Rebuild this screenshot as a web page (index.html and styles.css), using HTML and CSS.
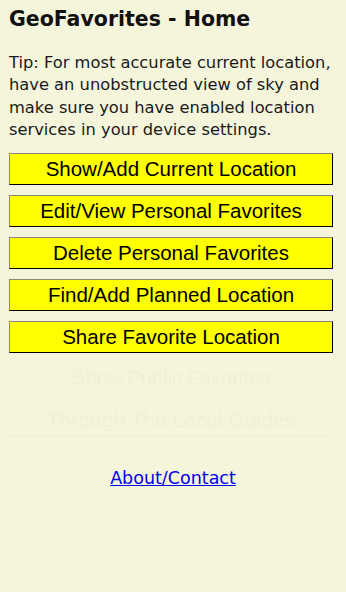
FILE: index.html
```html
<!DOCTYPE html>
<html>
<head>
<meta charset="utf-8">
<link rel="stylesheet" href="styles.css">
</head>
<body>
<h1 class="title">GeoFavorites - Home</h1>
<p class="tip">Tip: For most accurate current location, have an unobstructed view of sky and make sure you have enabled location services in your device settings.</p>
<div class="buttons">
  <button class="btn">Show/Add Current Location</button>
  <button class="btn">Edit/View Personal Favorites</button>
  <button class="btn">Delete Personal Favorites</button>
  <button class="btn">Find/Add Planned Location</button>
  <button class="btn">Share Favorite Location</button>
  <div class="ghost">
    <span>Show Public Favorites</span>
    <span class="ghost-big">Through The Local Guides</span>
  </div>
</div>
<div class="footer"><a href="#" class="link">About/Contact</a></div>
</body>
</html>
```
FILE: styles.css
```css
html, body {
  background: #f5f5dc;
}
body {
  margin: 8px;
  font-family: "DejaVu Sans", Verdana, sans-serif;
  color: #111;
}
.title {
  font-size: 20.5px;
  font-weight: bold;
  margin: 0 0 0 1px;
  line-height: 22px;
}
.tip {
  font-size: 16.3px;
  line-height: 22.3px;
  margin: 22px 0 0 1px;
  color: #1a1a1a;
}
.buttons {
  margin: 12px 0 0 1px;
  width: 324px;
  display: flex;
  flex-direction: column;
  gap: 10px;
}
.btn {
  height: 32px;
  background: #ffff00;
  border: 1px solid #000;
  border-top-color: #8a8a7a;
  border-left-color: #8a8a7a;
  font-family: "Liberation Sans", Arial, sans-serif;
  font-size: 20.5px;
  color: #000;
  padding: 0;
}
.ghost {
  display: flex;
  flex-direction: column;
  align-items: center;
  height: 74px;
  border-bottom: 1px solid #ededd5;
  color: #f0f0d8;
  font-family: "Liberation Sans", Arial, sans-serif;
  font-size: 20px;
  padding-top: 4px;
  gap: 18px;
  box-sizing: border-box;
}
.ghost-big { font-size: 21px; }
.footer {
  text-align: center;
  margin-top: 31px;
  width: 330px;
}
.link {
  font-size: 17.5px;
  color: #0000ee;
}
```
